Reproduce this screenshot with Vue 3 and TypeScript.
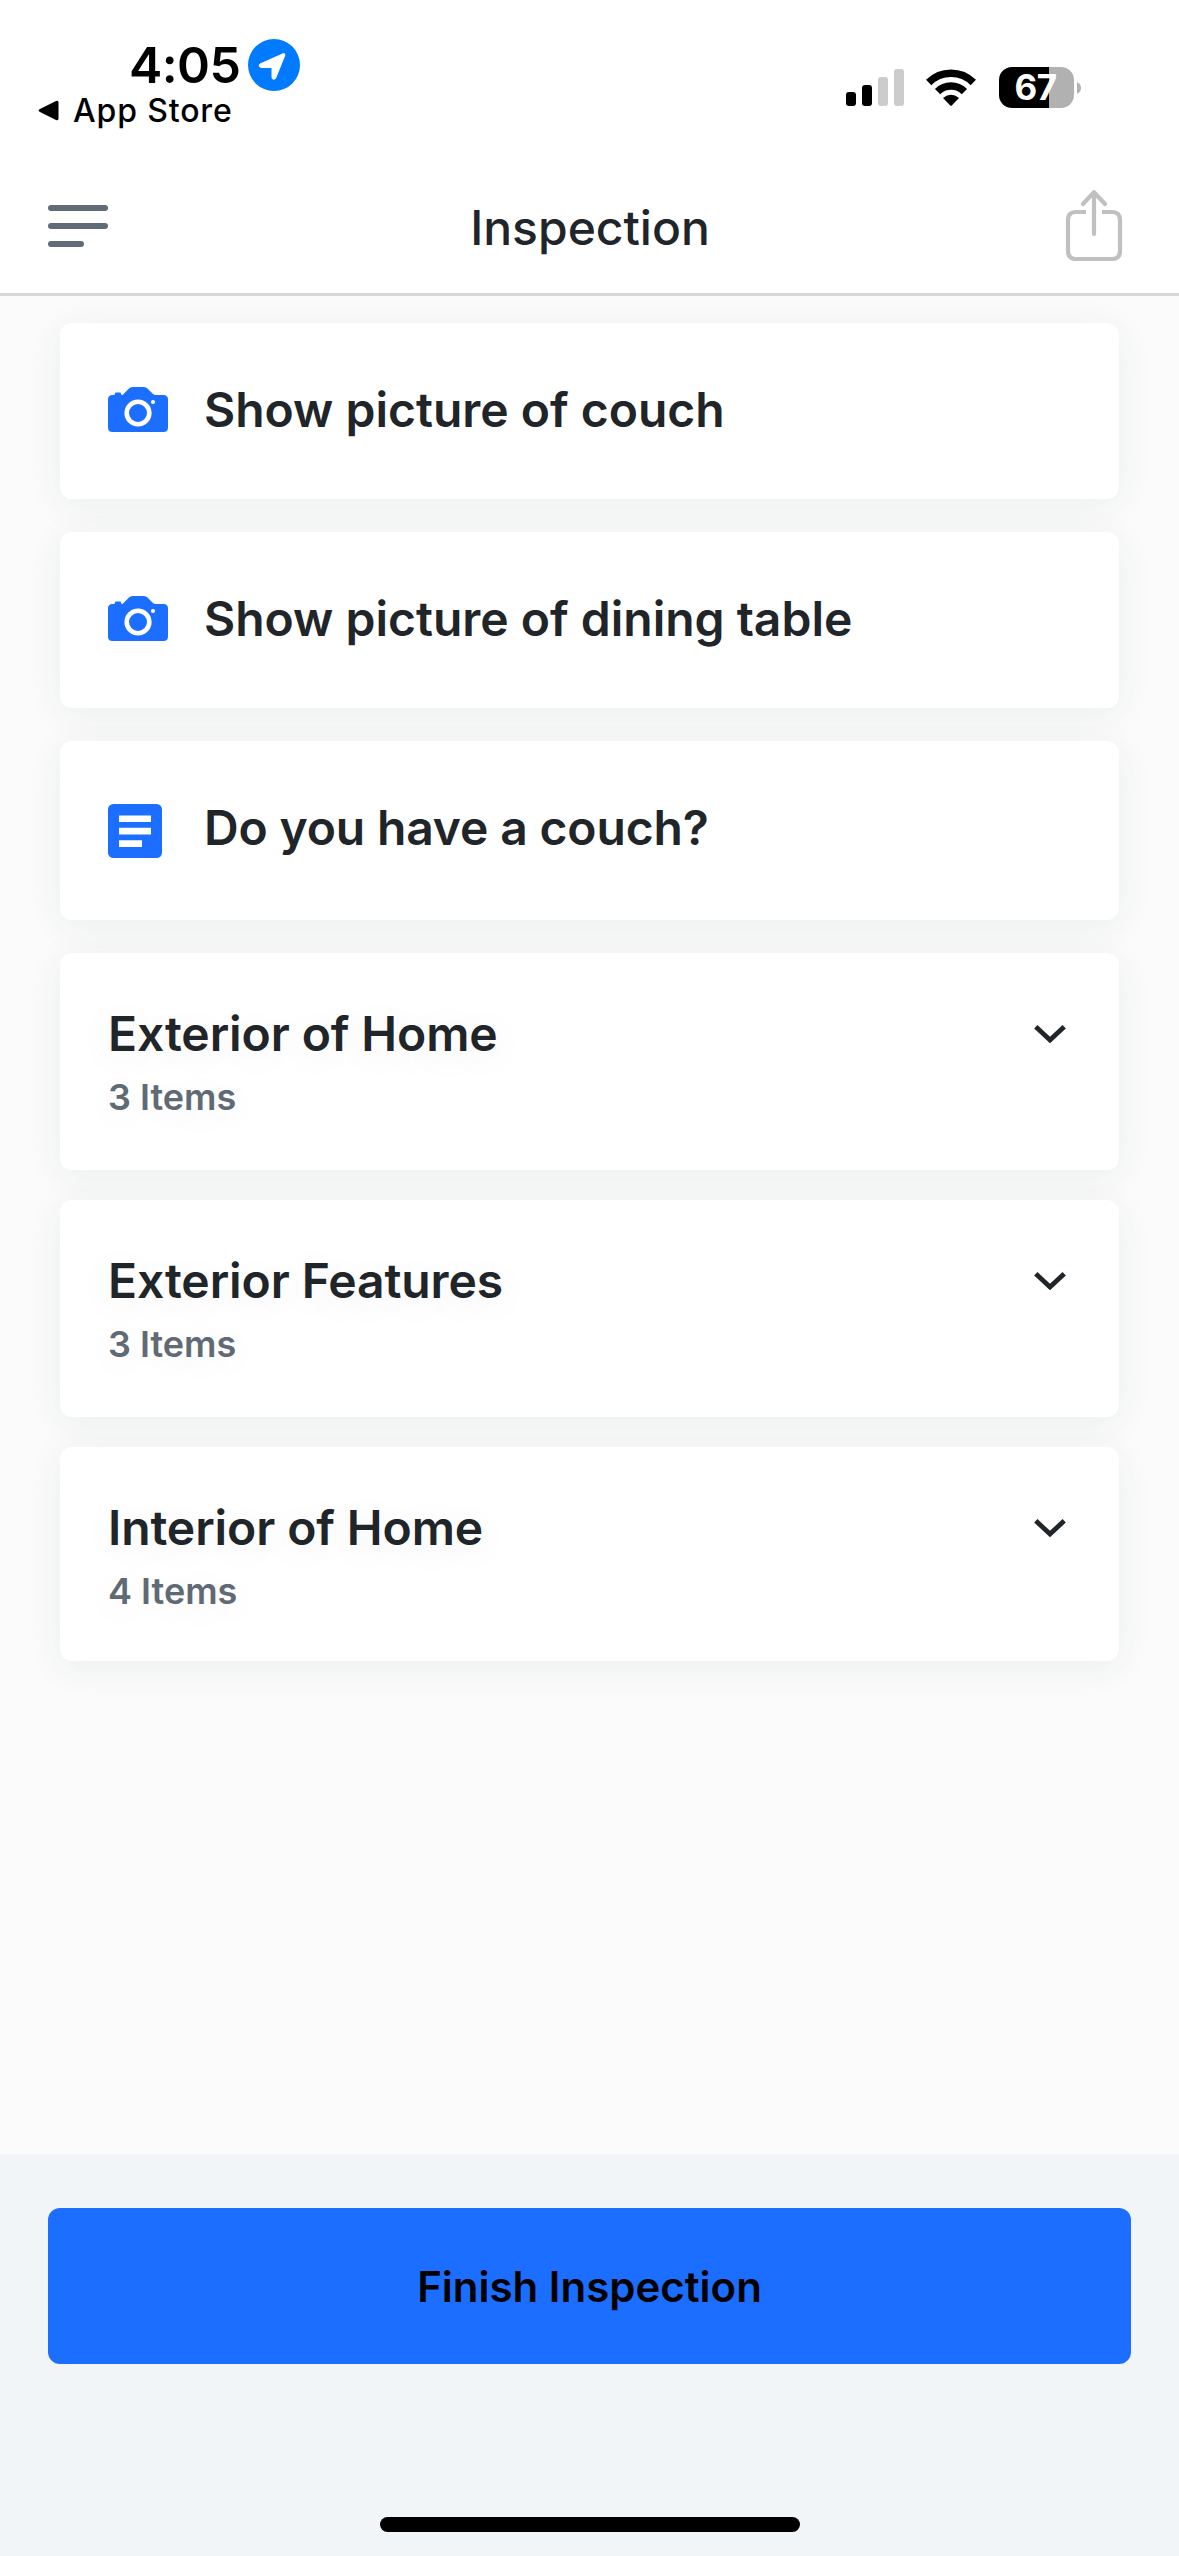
<script setup lang="ts">
interface Task {
  icon: 'camera' | 'note'
  label: string
}
interface Section {
  title: string
  count: number
}

const tasks: Task[] = [
  { icon: 'camera', label: 'Show picture of couch' },
  { icon: 'camera', label: 'Show picture of dining table' },
  { icon: 'note', label: 'Do you have a couch?' },
]
const sections: Section[] = [
  { title: 'Exterior of Home', count: 3 },
  { title: 'Exterior Features', count: 3 },
  { title: 'Interior of Home', count: 4 },
]
</script>

<template>
  <div class="screen">
    <header class="top">
      <div class="status">
        <div class="status-left">
          <div class="clock">
            <span class="time">4:05</span>
            <svg class="location" viewBox="0 0 52 52">
              <circle cx="26" cy="26" r="26" fill="#007aff" />
              <path d="M12 25 L35 14.800 Q37.200 14 36.800 16.400 L27.500 39.500 Q24.500 41.500 24 38.500 V28.500 H13 Q9.500 27 12 25Z" fill="#fff" stroke="#fff" stroke-width="1" stroke-linejoin="round" />
            </svg>
          </div>
          <div class="back">
            <svg class="back-arrow" viewBox="0 0 21 21"><path d="M2 9 L18 1 Q20.500 0 20.500 2.500 V18.500 Q20.500 21 18 20 L2 12 Q-.8 10.500 2 9Z" /></svg>
            <span>App Store</span>
          </div>
        </div>
        <div class="status-right">
          <svg class="signal" viewBox="0 0 58 37">
            <rect x="0" y="23" width="10" height="14" rx="3" />
            <rect x="16" y="16" width="10" height="21" rx="3" />
            <rect x="32" y="8" width="10" height="29" rx="3" fill="#ccc" />
            <rect x="48" y="0" width="10" height="37" rx="3" fill="#ccc" />
          </svg>
          <svg class="wifi" viewBox="0 0 50 37">
            <g fill="none" stroke="#000" stroke-width="7.500">
              <path d="M2.700 13.500 A31.500 31.500 0 0 1 47.300 13.500" />
              <path d="M11.600 22.600 A19 19 0 0 1 38.400 22.600" />
            </g>
            <path d="M17 29 Q25 22.500 33 29 L26 36.300 Q25 37.300 24 36.300Z" />
          </svg>
          <div class="battery">
            <div class="cell">67</div>
            <svg class="nub" viewBox="0 0 4 12"><path d="M0 0 Q4 2.200 4 6 T0 12Z" fill="#b1b1b1" /></svg>
          </div>
        </div>
      </div>
      <nav class="bar">
        <svg class="menu" viewBox="0 0 60 42" fill="#606b77">
          <rect width="60" height="6" rx="3" />
          <rect y="18" width="60" height="6" rx="3" />
          <rect y="36" width="36" height="6" rx="3" />
        </svg>
        <h1 class="title">Inspection</h1>
        <svg class="share" viewBox="0 0 58 72" fill="none" stroke="#c0c0c0" stroke-width="4.200" stroke-linecap="round" stroke-linejoin="round">
          <path d="M21 22 H11 Q3 22 3 30 V61 Q3 69 11 69 H47 Q55 69 55 61 V30 Q55 22 47 22 H37" stroke-linecap="butt" />
          <path d="M29 44 V3 M18 14 L29 2.300 L40 14" />
        </svg>
      </nav>
    </header>

    <main class="list">
      <article v-for="t in tasks" :key="t.label" class="card task" :class="t.icon">
        <div class="icon-slot">
          <svg v-if="t.icon === 'camera'" class="camera-icon" viewBox="0 0 60 45">
            <path fill="#1b6eff" d="M4.500 8 H6 Q7 7.500 7 6.500 Q7 5.500 8 5.500 H12 Q13 5.500 13 6.500 Q13 8 14.500 8 L21 1.500 Q22.500 0 24.500 0 H36 Q38 0 39.500 1.500 L44.500 6.500 Q46 8 48 8 H55.500 Q60 8 60 12.500 V40.500 Q60 45 55.500 45 H4.500 Q0 45 0 40.500 V12.500 Q0 8 4.500 8Z" />
            <circle cx="30" cy="26" r="11.300" fill="none" stroke="#fff" stroke-width="4.600" />
            <circle cx="45" cy="15" r="2.100" fill="#fff" />
          </svg>
          <svg v-else class="note-icon" viewBox="0 0 54 54">
            <rect width="54" height="54" rx="5.500" fill="#1b6eff" />
            <path d="M11 11.500H43V18H11ZM11 23.700H43V30.500H11ZM11 36.200H34V43H11Z" fill="#fff" />
          </svg>
        </div>
        <span class="label">{{ t.label }}</span>
      </article>

      <article v-for="s in sections" :key="s.title" class="card section">
        <div class="section-text">
          <h2 class="label">{{ s.title }}</h2>
          <p class="count">{{ s.count }} Items</p>
        </div>
        <svg class="chevron" viewBox="0 0 32 18"><path d="M1.800 1.800 L16 15 L30.200 1.800" fill="none" stroke="#1f2529" stroke-width="4.800" /></svg>
      </article>
    </main>

    <footer class="footer">
      <button class="finish" type="button">Finish Inspection</button>
      <div class="home-bar"></div>
    </footer>
  </div>
</template>

<style>
body {
  margin: 0;
}
</style>

<style scoped>
.screen {
  width: 1179px;
  height: 2556px;
  display: flex;
  flex-direction: column;
  overflow: hidden;
  background: #fbfbfb;
  color: #1f2529;
  font-family: Inter, 'Liberation Sans', sans-serif;
}
svg {
  display: block;
  flex: none;
}
.top {
  box-sizing: border-box;
  height: 296px;
  flex: none;
  background: #fff;
  border-bottom: 3px solid #d5d6d6;
}
.status {
  height: 157px;
  display: flex;
  justify-content: space-between;
  color: #000;
}
.status-left {
  padding: 39px 0 0 38px;
}
.clock {
  display: flex;
  align-items: center;
  height: 52px;
  padding-left: 91px;
}
.time {
  width: 119px;
  font-size: 50px;
  line-height: 52px;
  font-weight: 600;
  letter-spacing: -0.6px;
  white-space: nowrap;
}
.location {
  width: 52px;
  height: 52px;
}
.back {
  display: flex;
  align-items: center;
  gap: 14px;
  height: 38px;
  font-size: 32px;
  font-weight: 500;
  letter-spacing: 0.85px;
}
.back-arrow {
  width: 21px;
  height: 21px;
}
.status-right {
  display: flex;
  align-items: flex-start;
  padding: 67px 98px 0 0;
}
.signal {
  width: 58px;
  height: 37px;
  margin: 2px 22px 0 0;
}
.wifi {
  width: 50px;
  height: 37px;
  margin: 2px 23px 0 0;
}
.battery {
  display: flex;
  align-items: center;
  gap: 3px;
}
.cell {
  box-sizing: border-box;
  width: 75px;
  height: 41px;
  padding-right: 2px;
  border-radius: 13px;
  background: linear-gradient(90deg, #000 50px, #b1b1b1 50px);
  color: #fff;
  font-size: 35px;
  line-height: 41px;
  font-weight: 700;
  letter-spacing: -0.5px;
  text-align: center;
}
.nub {
  width: 4px;
  height: 12px;
}
.bar {
  display: flex;
  align-items: flex-start;
  justify-content: space-between;
  padding: 0 56px 0 48px;
}
.menu {
  width: 60px;
  height: 42px;
  margin-top: 48px;
}
.title {
  margin: 42px 0 0 7px;
  font-size: 48px;
  line-height: 58px;
  font-weight: 500;
}
.share {
  width: 58px;
  height: 72px;
  margin-top: 33px;
}
.list {
  flex: 1;
  min-height: 0;
  display: flex;
  flex-direction: column;
  padding: 27px 60px 0;
}
.card {
  box-sizing: border-box;
  flex: none;
  display: flex;
  border-radius: 12px;
  background: #fff;
  box-shadow: 0 6px 36px rgba(32, 56, 56, 0.07);
}
.task {
  height: 176px;
  margin-bottom: 33px;
  padding: 57px 48px 0;
}
.task.note {
  height: 179px;
  letter-spacing: -0.15px;
}
.icon-slot {
  width: 96px;
}
.camera-icon {
  width: 60px;
  height: 45px;
  margin-top: 7px;
}
.note-icon {
  width: 54px;
  height: 54px;
  margin-top: 6px;
}
.label {
  margin: 0;
  font-size: 48px;
  line-height: 60px;
  font-weight: 600;
  white-space: nowrap;
}
.section {
  height: 217px;
  margin-bottom: 30px;
  padding: 51px 53px 0 48px;
  justify-content: space-between;
}
.section .label {
  letter-spacing: -0.09px;
}
.section:last-of-type {
  height: 214px;
}
.section-text {
  text-shadow: 0 6px 36px rgba(32, 56, 56, 0.08);
}
.count {
  margin: 11px 0 0;
  font-size: 36px;
  line-height: 44px;
  font-weight: 600;
  color: #606a74;
}
.chevron {
  width: 32px;
  height: 18px;
  margin-top: 21px;
}
.footer {
  box-sizing: border-box;
  height: 402px;
  flex: none;
  display: flex;
  flex-direction: column;
  justify-content: space-between;
  padding: 54px 48px 24px;
  background: #f1f5f8;
}
.finish {
  box-sizing: border-box;
  height: 156px;
  padding: 2px 0 0;
  border: 0;
  border-radius: 12px;
  background: #1b6eff;
  color: #000;
  font: 600 42px/154px Inter, 'Liberation Sans', sans-serif;
}
.home-bar {
  width: 420px;
  height: 15px;
  margin-left: 332px;
  border-radius: 8px;
  background: #000;
}
</style>
